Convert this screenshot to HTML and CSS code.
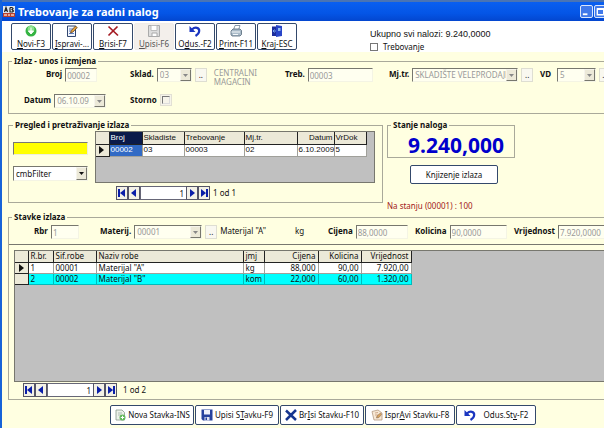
FILE: index.html
```html
<!DOCTYPE html>
<html lang="bs">
<head>
<meta charset="utf-8">
<title>Trebovanje za radni nalog</title>
<link rel="stylesheet" href="styles.css">
</head>
<body>
<svg width="0" height="0" class="defs" aria-hidden="true">
  <defs>
    <symbol id="i-drop" viewBox="0 0 5 3"><path d="M0 0h5L2.500 3z" fill="currentColor"/></symbol>
    <symbol id="i-first" viewBox="0 0 8 8"><path d="M0 0h2v8H0zM7 0v8L2 4z" fill="currentColor"/></symbol>
    <symbol id="i-prev" viewBox="0 0 8 8"><path d="M6 0v8L1 4z" fill="currentColor"/></symbol>
    <symbol id="i-next" viewBox="0 0 8 8"><path d="M2 0v8l5-4z" fill="currentColor"/></symbol>
    <symbol id="i-last" viewBox="0 0 8 8"><path d="M6 0h2v8H6zM1 0v8l5-4z" fill="currentColor"/></symbol>
    <symbol id="i-undo" viewBox="0 0 12 12"><path d="M3 4.500C6 1.500 10.500 2.500 10.200 6c-.2 2.500-2 4-3.700 5" fill="none" stroke="#1a35c0" stroke-width="2.200"/><path d="M.5 1v6h6z" fill="#1a35c0"/></symbol>
    <symbol id="i-disk" viewBox="0 0 12 12"><path d="M.5.5h11v11H2L.5 10z" fill="currentColor"/><path d="M3 1h6v4.500H3z" fill="#eef1fb"/><path d="M3.500 8h5v3.500h-5z" fill="#dfe3f0"/><path d="M4.500 8.500H6v2.500H4.500z" fill="currentColor"/></symbol>
  </defs>
</svg>
<div class="window">
  <header class="titlebar">
    <svg class="app-icon" viewBox="0 0 12 12"><path d="M0 0h12v7H0z" fill="#dfe6ee"/><path d="M1.500 6 3 1.500 4.500 6M2 4.500h2M7 1.500v4.500h2.500L10.500 5 9 3.500l1-1L9 1.500H7" fill="none" stroke="#222" stroke-width="1.200"/><path d="M0 7h12v4H0z" fill="#b9402e"/><path d="M1 9h3m1 0h2m1 0h3" stroke="#f5cdb8" stroke-width="1.500"/></svg>
    <h1>Trebovanje za radni nalog</h1>
    <div class="captions">
      <button class="caption" aria-label="Minimize"><svg viewBox="0 0 12 12"><path d="M2 8h5v2H2z" fill="#fff"/></svg></button>
      <button class="caption" aria-label="Maximize"><svg viewBox="0 0 12 12"><path d="M2.500 3.500h7v6h-7zM2 3h8" fill="none" stroke="#fff" stroke-width="1.500"/></svg></button>
    </div>
  </header>

  <div class="toolbar">
    <button class="tool"><svg viewBox="0 0 12 12"><circle cx="6" cy="6" r="5.500" fill="#35b443"/><circle cx="6" cy="4" r="3.500" fill="#8be08c"/><path d="M6 2.500v4M3.500 6h5L6 9z" fill="#fff" stroke="#fff"/></svg><span><u>N</u>ovi-F3</span></button>
    <button class="tool"><svg viewBox="0 0 12 12"><path d="M1.500 1h8v10.500h-8z" fill="#f3f6fd" stroke="#31466f"/><path d="M3 4h4M3 6h3M3 8.500h5" stroke="#5e7fc0"/><path d="m4.500 8 .8-2.500L9.500 1l1.800 1.500L7 7z" fill="#eda43a" stroke="#4a3420" stroke-width=".7"/></svg><span><u>I</u>spravi-...</span></button>
    <button class="tool"><svg viewBox="0 0 12 12"><path d="m1.500 1.500 9.500 9M10.500 1.500 1.500 10.500" stroke="#a51c24" stroke-width="1.700"/></svg><span><u>B</u>risi-F7</span></button>
    <button class="tool" disabled><svg viewBox="0 0 12 12"><path d="M.5.500h11v11H.5z" fill="#ddd" stroke="#aaa"/><path d="M3 .5h6v5H3z" fill="#fff" stroke="#bbb"/><path d="M4 8h5v3.500H4z" fill="#fff" stroke="#aaa"/></svg><span><u>U</u>pisi-F6</span></button>
    <button class="tool"><svg><use href="#i-undo"/></svg><span>O<u>d</u>us.-F2</span></button>
    <button class="tool"><svg viewBox="0 0 12 12"><path d="m3.500 5 1.500-4.500h5L8.500 5z" fill="#fff" stroke="#6f8294" stroke-width=".8"/><path d="m1 6 2-2h7l1.500 1.500v4L10 11H2L1 9.500z" fill="#a9bac8" stroke="#536879" stroke-width=".8"/><path d="M1.500 7h8.500M3 9.500h5" stroke="#f4f8fa"/></svg><span><u>P</u>rint-F11</span></button>
    <button class="tool"><svg viewBox="0 0 12 12"><path d="M1 1.500h5V11H1z" fill="#1c2d9c"/><path d="m5 0 6 1v10l-6 1z" fill="#2845c8"/><path d="M7 3h2.500v3H7z" fill="#92bdf3"/><path d="M2 6h3M3.500 4.500 2 6l1.500 1.500" fill="none" stroke="#76a5ef"/></svg><span><u>K</u>raj-ESC</span></button>
    <div class="summary">
      <div class="total">Ukupno svi nalozi: 9.240,0000</div>
      <label class="check"><input type="checkbox">Trebovanje</label>
    </div>
  </div>

  <main>
    <fieldset class="entry">
      <legend>Izlaz - unos i izmjena</legend>
      <div class="entry-grid">
        <div class="field field-end"><label for="broj">Broj</label><input id="broj" class="w-s" value="00002" disabled></div>
        <div class="field"><label for="sklad">Sklad.</label><span class="combo w-m"><select id="sklad" disabled><option>03</option></select><i><svg><use href="#i-drop"/></svg></i></span><button class="dots">..</button><span class="note">CENTRALNI MAGACIN</span></div>
        <div class="field"><label for="treb">Treb.</label><input id="treb" class="w-l" value="00003" disabled></div>
        <div class="field"><label for="mjtr">Mj.tr.</label><span class="combo w-xl"><select id="mjtr" disabled><option>SKLADIŠTE VELEPRODAJE</option></select><i><svg><use href="#i-drop"/></svg></i></span><button class="dots">..</button></div>
        <div class="field"><label for="vd">VD</label><span class="combo w-vd"><select id="vd" disabled><option>5</option></select><i><svg><use href="#i-drop"/></svg></i></span><button class="dots">..</button></div>
        <div class="field"><label for="datum">Datum</label><span class="combo w-d"><select id="datum" disabled><option>06.10.09</option></select><i><svg><use href="#i-drop"/></svg></i></span></div>
        <div class="field"><label for="storno">Storno</label><span class="storno"><input id="storno" type="checkbox" disabled></span></div>
      </div>
    </fieldset>

    <div class="middle">
      <fieldset class="browse">
        <legend>Pregled i pretraživanje izlaza</legend>
        <div class="filters">
          <input class="search" aria-label="Pretraga">
          <span class="combo active"><select aria-label="Filter"><option>cmbFilter</option></select><i><svg><use href="#i-drop"/></svg></i></span>
        </div>
        <div class="browse-data">
          <div class="datagrid">
            <table class="orders">
              <colgroup><col class="c13"><col class="c33"><col class="c42"><col class="c60"><col class="c53"><col class="c37"><col class="c32"></colgroup>
              <tr><th></th><th class="picked-head">Broj</th><th>Skladiste</th><th>Trebovanje</th><th>Mj.tr.</th><th class="num">Datum</th><th>VrDok</th></tr>
              <tr><th class="mark"><svg><use href="#i-next"/></svg></th><td class="picked">00002</td><td>03</td><td>00003</td><td>02</td><td class="num">6.10.2009</td><td>5</td></tr>
            </table>
          </div>
          <div class="pager">
            <button aria-label="Prvi"><svg><use href="#i-first"/></svg></button><button aria-label="Prethodni"><svg><use href="#i-prev"/></svg></button><input aria-label="Zapis" value="1"><button aria-label="Sljedeci"><svg><use href="#i-next"/></svg></button><button aria-label="Zadnji"><svg><use href="#i-last"/></svg></button><span>1 od 1</span>
          </div>
        </div>
      </fieldset>
      <div class="status">
        <fieldset class="balance">
          <legend>Stanje naloga</legend>
          <output>9.240,000</output>
        </fieldset>
        <button class="post">Knjizenje izlaza</button>
        <p class="stock">Na stanju (00001) : 100</p>
      </div>
    </div>

    <fieldset class="items">
      <legend>Stavke izlaza</legend>
      <div class="item-row">
        <div class="field f-rbr"><label for="rbr">Rbr</label><input id="rbr" class="w-r" value="1" disabled></div>
        <div class="field f-mat"><label for="mat">Materij.</label><span class="combo w-mat"><select id="mat" disabled><option>00001</option></select><i><svg><use href="#i-drop"/></svg></i></span><button class="dots">..</button><span class="name">Materijal "A"</span></div>
        <span class="f-unit">kg</span>
        <div class="field f-price"><label for="cijena">Cijena</label><input id="cijena" class="w-p" value="88,0000" disabled></div>
        <div class="field f-qty"><label for="kol">Kolicina</label><input id="kol" class="w-q" value="90,0000" disabled></div>
        <div class="field f-val"><label for="vrij">Vrijednost</label><input id="vrij" class="w-q" value="7.920,0000" disabled></div>
      </div>
      <div class="datagrid lines">
        <table>
          <colgroup><col class="c13"><col class="c25"><col class="c43"><col class="c147"><col class="c21"><col class="c54"><col class="c43"><col class="c50"></colgroup>
          <tr><th></th><th>R.br.</th><th>Sif.robe</th><th>Naziv robe</th><th>jmj</th><th class="num">Cijena</th><th class="num">Kolicina</th><th class="num">Vrijednost</th></tr>
          <tr><th class="mark"><svg><use href="#i-next"/></svg></th><td>1</td><td>00001</td><td>Materijal "A"</td><td>kg</td><td class="num">88,000</td><td class="num">90,00</td><td class="num">7.920,00</td></tr>
          <tr class="alt"><th></th><td>2</td><td>00002</td><td>Materijal "B"</td><td>kom</td><td class="num">22,000</td><td class="num">60,00</td><td class="num">1.320,00</td></tr>
        </table>
      </div>
      <div class="pager">
        <button aria-label="Prvi"><svg><use href="#i-first"/></svg></button><button aria-label="Prethodni"><svg><use href="#i-prev"/></svg></button><input aria-label="Stavka" value="1"><button aria-label="Sljedeca"><svg><use href="#i-next"/></svg></button><button aria-label="Zadnja"><svg><use href="#i-last"/></svg></button><span>1 od 2</span>
      </div>
    </fieldset>

    <div class="actions">
      <button><svg viewBox="0 0 12 12"><path d="M2 1h6l2.500 2.500V11H2z" fill="#edf2ea" stroke="#87988b" stroke-width=".8"/><path d="M4 4h4M4 6h3" stroke="#98aaa0" stroke-width=".7"/><circle cx="8.500" cy="8.500" r="3" fill="#64b95d"/><path d="M8.500 6.800v3.400M6.800 8.500h3.400" stroke="#fff"/></svg><span>Nova Stavka-INS</span></button>
      <button class="save"><svg><use href="#i-disk"/></svg><span>Upisi S<u>T</u>avku-F9</span></button>
      <button><svg viewBox="0 0 12 12"><path d="m1 1.500 10 9.500M11 1 1 11" stroke="#16358f" stroke-width="2.500"/></svg><span>Br<u>I</u>si Stavku-F10</span></button>
      <button class="wide"><svg viewBox="0 0 12 12"><path d="M1 2.500 7 1l4 3v7H3z" fill="#f7e8d4" stroke="#b59a83" stroke-width=".8"/><path d="m4 4 3-.5M4 6h3M5 8h2" stroke="#c49877" stroke-width=".8"/><path d="m5.500 9 1-2.500L9.500 4l1.200 1.200L8 8.500z" fill="#dba45b" stroke="#8c715b" stroke-width=".6"/></svg><span>Ispr<u>A</u>vi Stavku-F8</span></button>
      <button class="narrow"><svg><use href="#i-undo"/></svg><span>Odus.St<u>v</u>-F2</span></button>
    </div>
  </main>
</div>
</body>
</html>
```

FILE: styles.css
```css
* { box-sizing: border-box; }
body {
  margin: 0;
  font: 8px/10px "Noto Sans", sans-serif;
  color: #111;
  background: #ffffe1;
}
.defs { position: absolute; }
button, input, select { font: inherit; color: inherit; margin: 0; padding: 0; border-radius: 0; min-width: 0; }
svg { display: block; }
.window { min-height: 100vh; border-left: 2px solid #1763d8; overflow: hidden; }

.titlebar {
  display: flex; align-items: center; gap: 3px;
  height: 21px; padding-left: 1px;
  border-top: 2px solid #4a74b4;
  background: linear-gradient(#0a5ff0, #0455e6 60%, #0346cf);
}
.app-icon { width: 12px; height: 12px; }
h1 { flex: 1; margin: 0; font-size: 11px; line-height: 14px; color: #fff; white-space: nowrap; }
.captions { display: flex; gap: 1px; margin-right: -3px; }
.caption { width: 13px; height: 13px; border: 1px solid #dbe6fb; border-radius: 2px; background: #3f78ea; }
.caption svg { width: 11px; height: 11px; }

.toolbar { display: flex; height: 31px; padding: 2px 0 0 9px; background: #fff; gap: 1px; }
.tool {
  display: flex; flex-direction: column; align-items: center; justify-content: space-between;
  width: 40px; height: 27px; padding: 1px 0 0;
  border: 1px solid #34496b; border-radius: 2px; background: #fff; white-space: nowrap;
}
.tool svg { width: 12px; height: 12px; }
.tool:disabled { border-color: #f0ece8; background: #f3efeb; color: #555; }
.summary { margin-left: 72px; padding-top: 5px; }
.total { font: 9px/12px "Liberation Sans", sans-serif; white-space: nowrap; }
.check { display: flex; align-items: center; gap: 5px; margin-top: 2px; }
.check input { appearance: none; width: 8px; height: 8px; border: 1px solid #777; background: #fff; }

main { padding: 3px 0 3px 6px; }
fieldset { min-width: 0; margin: 0; padding: 0; border: 1px solid #a9a99a; }
legend { margin-left: 3px; padding: 0 2px; font-weight: bold; line-height: 12px; }

.entry { height: 59px; border-right: 0; }
.entry-grid {
  display: grid; grid-template-columns: 106px 155px 104px 151px 70px;
  grid-auto-rows: 26px; padding: 1px 0 0 15px;
}
.field { display: flex; align-items: flex-start; gap: 3px; white-space: nowrap; }
.field-end { padding-left: 22px; }
.field label { font-weight: bold; line-height: 12px; }
.field input:not([type]), .combo {
  height: 14px; border: 1px solid; border-color: #77776e #f4f4e4 #f4f4e4 #77776e; background: #fffff0;
}
.field input:not([type]) { padding-left: 1px; color: #999; }
.combo { display: grid; grid-template-columns: 1fr 11px; }
.combo select {
  grid-area: 1 / 1 / 2 / 3; width: 100%; appearance: none; border: 0; padding-left: 2px;
  background: transparent; line-height: 12px; color: #999; opacity: 1;
}
.combo i {
  grid-area: 1 / 2; display: grid; place-items: center; pointer-events: none;
  border: 1px solid; border-color: #f6f4ec #77776e #77776e #f6f4ec; background: #ece9d8; color: #888;
}
.combo i svg { width: 5px; height: 3px; }
.combo.active { background: #fff; }
.combo.active select, .combo.active i { color: #111; }
.dots { width: 12px; height: 14px; border: 1px solid #deded2; background: #f9f8f0; line-height: 10px; }
.note { width: 48px; margin-left: 4px; line-height: 9px; white-space: normal; color: #999; }
.w-s { width: 32px; } .w-m { width: 35px; } .w-l { width: 65px; } .w-xl { width: 106px; }
.w-vd { width: 41px; margin-left: 3px; } .w-d { width: 52px; }
.w-r { width: 28px; } .w-mat { width: 68px; } .w-p { width: 52px; } .w-q { width: 57px; }
.storno { display: flex; padding: 1px; border: 1px solid #e2e0d4; background: #f6f4ea; }
.storno input { appearance: none; width: 8px; height: 8px; border: 1px solid; border-color: #777 #ddd #ddd #777; }

.middle { display: flex; gap: 4px; margin-top: 5px; }
.browse {
  display: grid; grid-template-columns: 82px 280px;
  width: 375px; height: 84px; padding-left: 4px;
}
.browse > legend { margin-left: 0; }
.filters { display: grid; align-content: start; gap: 11px; padding: 11px 7px 0 0; }
.search { width: 100%; height: 13px; border: 1px solid; border-color: #777 #eed #eed #777; background: #ff0; }
.filters .combo { height: 15px; }
.datagrid { height: 52px; border: 1px solid #77776e; background: #c0c0c0; overflow: hidden; }
table { table-layout: fixed; width: 0; border-collapse: collapse; line-height: 10px; }
th, td { height: 11px; padding: 0 2px; border: 1px solid #a0a09a; border-width: 0 1px 1px 0; background: #fff; font-weight: normal; text-align: left; white-space: nowrap; overflow: hidden; }
th { background: #ece9d8; border-color: #222; }
.orders { font-family: "Liberation Sans", sans-serif; }
.orders th, .orders td { height: 12px; padding: 0 1px; }
.num { text-align: right; }
.orders .picked-head { background: #0a1a4a; color: #fff; }
.picked { background: #316ac5; color: #fff; }
.mark svg { width: 8px; height: 8px; }
.alt td { background: #0ff; border-color: #0bb; }
.c13 { width: 13px; } .c21 { width: 21px; } .c25 { width: 25px; } .c32 { width: 32px; } .c33 { width: 33px; }
.c37 { width: 37px; } .c42 { width: 42px; } .c43 { width: 43px; } .c50 { width: 50px; } .c53 { width: 53px; }
.c54 { width: 54px; } .c60 { width: 60px; } .c147 { width: 147px; }
.pager { display: flex; align-items: center; height: 14px; margin: 3px 0 0 21px; white-space: nowrap; }
.pager button { display: grid; place-items: center; width: 12px; height: 14px; border: 1px solid #556; background: #f3f1e6; color: #0a1ea8; }
.pager svg { width: 8px; height: 8px; }
.pager input { width: 46px; height: 14px; padding-right: 2px; border: 1px solid #667; border-right: 0; background: #fff; text-align: right; }
.pager span { margin-left: 3px; }

.status { flex: 1; }
.balance { width: 128px; height: 39px; }
output { display: block; margin-top: 3px; padding-left: 10px; font-size: 21px; font-weight: bold; line-height: 22px; color: #00c; text-align: center; }
.post { display: block; width: 88px; height: 19px; margin: 7px 0 0 23px; border: 1px solid #34496b; border-radius: 2px; background: #fff; }
.stock { margin: 17px 0 0; color: #a22020; }

.items { border-right: 0; }
.item-row { display: flex; height: 22px; padding: 2px 0 0 25px; border-bottom: 1px solid #77776e; white-space: nowrap; overflow: hidden; }
.item-row > * { flex: none; }
.name, .f-unit { line-height: 12px; }
.f-rbr { width: 66px; } .f-mat { width: 195px; } .f-unit { width: 33px; }
.f-price { width: 87px; } .f-qty { width: 99px; }
.lines { height: 132px; margin: 5px 0 0 5px; border-right: 0; }
.items .pager { margin: 1px 0 2px 14px; }
.items .pager span { margin-left: 6px; }

.actions { display: flex; gap: 1px; padding: 5px 0 0 102px; }
.actions button {
  display: flex; align-items: center; justify-content: center; gap: 2px;
  width: 84px; height: 20px; border: 1px solid #34496b; border-radius: 2px; background: #fff; white-space: nowrap;
}
.actions svg { width: 12px; height: 12px; flex: none; }
.actions .wide { width: 90px; }
.actions .narrow { width: 80px; gap: 8px; }
.save svg { color: #26429e; }
```
